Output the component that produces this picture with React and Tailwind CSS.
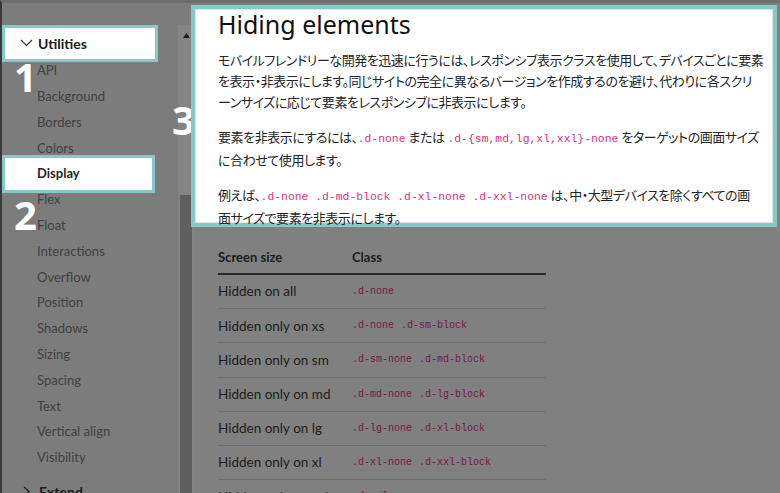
const NAV = ['API', 'Background', 'Borders', 'Colors', 'Display', 'Flex', 'Float', 'Interactions', 'Overflow', 'Position', 'Shadows', 'Sizing', 'Spacing', 'Text', 'Vertical align', 'Visibility'];

const ROWS = [
  ['Hidden on all', ['.d-none']],
  ['Hidden only on xs', ['.d-none', '.d-sm-block']],
  ['Hidden only on sm', ['.d-sm-none', '.d-md-block']],
  ['Hidden only on md', ['.d-md-none', '.d-lg-block']],
  ['Hidden only on lg', ['.d-lg-none', '.d-xl-block']],
  ['Hidden only on xl', ['.d-xl-none', '.d-xxl-block']],
  ['Hidden only on xxl', ['.d-xxl-none']],
];

function Code({ children }) {
  return <code className="font-['Liberation_Mono',monospace] text-[11.4px] tracking-normal text-[#d63384]">{children}</code>;
}

function Num({ n, className }) {
  return (
    <span className={`absolute text-[40px] leading-none font-bold text-white font-['Noto_Sans',sans-serif] ${className}`}>{n}</span>
  );
}

export default function App() {
  return (
    <div className="relative w-[780px] h-[493px] overflow-hidden flex bg-[#808080] border-t-[3px] border-l-2 border-t-[#6e6e6e] border-l-[#3a3a3a] font-['Noto_Sans','Noto_Sans_CJK_JP',sans-serif]">
      {/* sidebar */}
      <div className="w-[176px] shrink-0 bg-[#7c7c7c] pt-[25px] flex flex-col font-['Lato','Noto_Sans',sans-serif]">
        <div className="relative shrink-0 h-[30px] flex items-center">
          <div className="absolute left-0 top-[-3px] w-[156px] h-[37px] bg-white border-[3px] border-[#82cbc6]" />
          <svg className="relative ml-[18px] mr-[5px]" width="13" height="8" viewBox="0 0 13 8">
            <polyline points="1,1 6.5,6.5 12,1" fill="none" stroke="#333" strokeWidth="1.2" />
          </svg>
          <span className="relative text-[14px] font-bold text-[#1a1a1a]">Utilities</span>
        </div>
        <div className="relative shrink-0">
          <Num n="1" className="left-[12px] top-[-1px]" />
        </div>
        {NAV.map((item) => (
          <div key={item} className="relative shrink-0 h-[25.8px] flex items-center pl-[35px]">
            {item === 'Display' && (
              <div className="absolute left-0 top-[-6px] w-[153px] h-[38px] bg-white border-[3px] border-[#82cbc6]" />
            )}
            <span className={`relative text-[13px] ${item === 'Display' ? 'font-bold text-[#262626]' : 'text-[#414141]'}`}>{item}</span>
            {item === 'Flex' && <Num n="2" className="left-[12px] top-[8px]" />}
          </div>
        ))}
        <div className="shrink-0 mt-[8px] h-[26px] flex items-center pl-[21px] gap-[9px]">
          <svg width="7" height="11" viewBox="0 0 7 11">
            <polyline points="1,1 6,5.5 1,10" fill="none" stroke="#222" strokeWidth="1.3" />
          </svg>
          <span className="text-[14px] font-bold text-[#1e1e1e]">Extend</span>
        </div>
      </div>

      {/* scrollbar */}
      <div className="w-[16px] shrink-0 flex flex-col bg-[#7c7c7c]">
        <div className="h-[22px] shrink-0" />
        <div className="flex-1 bg-[#848484] flex flex-col">
          <div className="h-[170px] shrink-0 flex justify-center pt-[8px]">
            <svg width="7" height="5" viewBox="0 0 7 5"><polygon points="3.5,0 7,5 0,5" fill="#1e1e1e" /></svg>
          </div>
          <div className="flex-1 mx-[2px] bg-[#5f5f5f]" />
        </div>
      </div>

      {/* main */}
      <div className="relative flex-1">
        <Num n="3" className="left-[-22px] top-[97px]" />
        <div className="relative ml-[-3px] mt-[2px] w-[586px] h-[222px] bg-white border-4 border-[#82cbc6] shadow-[inset_0_0_0_1px_#e4e4e4] pl-[23px] pt-[1px] text-[#212529] [font-feature-settings:'palt']">
          <h1 className="text-[25px] leading-[29px] mb-[11px] text-[#111]">Hiding elements</h1>
          <p className="text-[13px] leading-[21px] whitespace-nowrap mb-[14px] tracking-[-0.45px]">
            モバイルフレンドリーな開発を迅速に行うには、レスポンシブ表示クラスを使用して、デバイスごとに要素<br />
            を表示・非表示にします。同じサイトの完全に異なるバージョンを作成するのを避け、代わりに各スクリ<br />
            ーンサイズに応じて要素をレスポンシブに非表示にします。
          </p>
          <p className="text-[13px] leading-[21px] whitespace-nowrap mb-[14px] tracking-[-0.45px]">
            要素を非表示にするには、<Code>.d-none</Code> または <Code>.d-{'{sm,md,lg,xl,xxl}'}-none</Code> をターゲットの画面サイズ<br />
            に合わせて使用します。
          </p>
          <p className="text-[13px] leading-[21px] whitespace-nowrap tracking-[-0.45px]">
            例えば、<Code>.d-none .d-md-block .d-xl-none .d-xxl-none</Code> は、中・大型デバイスを除くすべての画<br />
            面サイズで要素を非表示にします。
          </p>
        </div>

        <div className="pl-[24px] mt-[16px] w-[352px] font-['Lato','Noto_Sans',sans-serif]">
          <div className="h-[32px] flex items-center border-b-2 border-[#262626] text-[13px] font-bold text-[#1c1c1c]">
            <span className="w-[134px]">Screen size</span>
            <span>Class</span>
          </div>
          {ROWS.map(([label, codes]) => (
            <div key={label} className="h-[34.2px] flex items-center border-b border-[#6f6f6f] text-[13.5px] text-[#1c1c1c]">
              <span className="w-[134px]">{label}</span>
              <span className="flex gap-[7px] font-['Liberation_Mono',monospace] text-[10px] text-[#6e1c45]">
                {codes.map((c) => <span key={c}>{c}</span>)}
              </span>
            </div>
          ))}
        </div>
      </div>
    </div>
  );
}
